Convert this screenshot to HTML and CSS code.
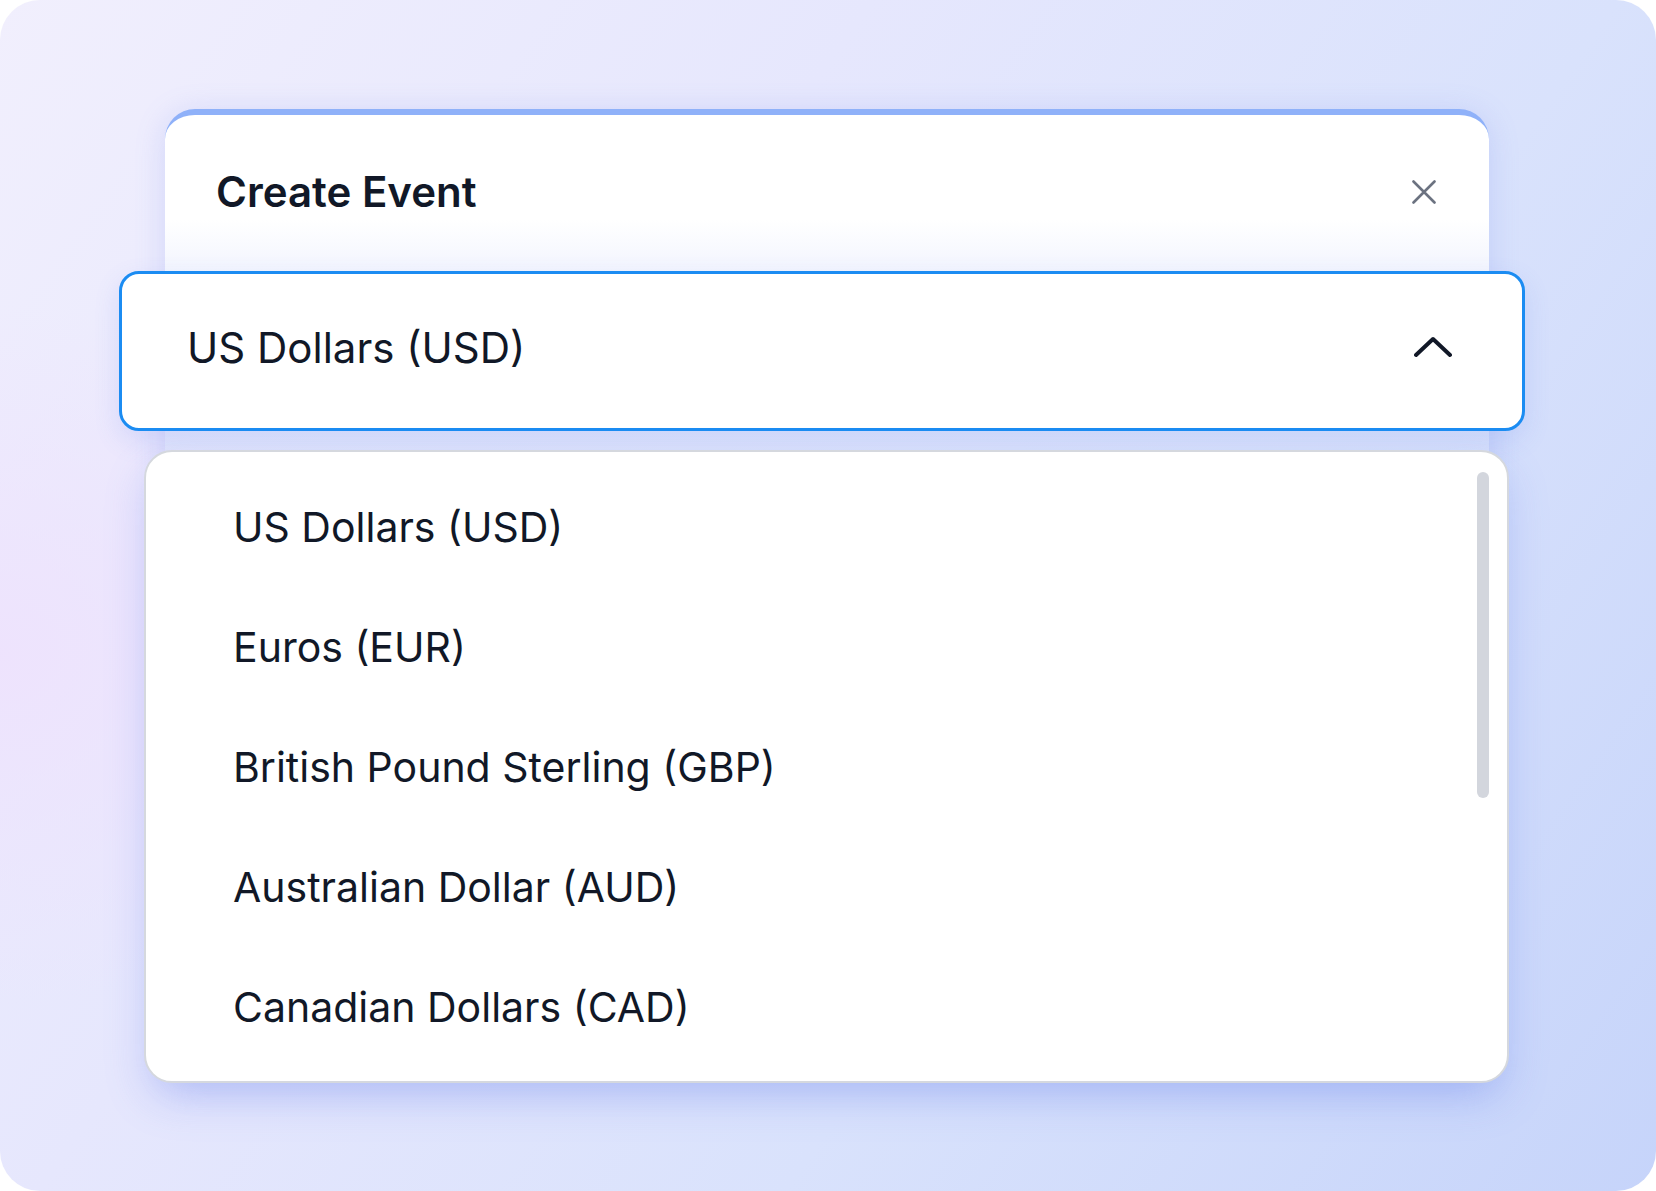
FILE: index.html
```html
<!DOCTYPE html>
<html lang="en">
<head>
<meta charset="utf-8">
<title>Create Event</title>
<link rel="stylesheet" href="styles.css">
</head>
<body>
<div class="stage">
  <div class="modal">
    <div class="modal-header">
      <h1 class="title">Create Event</h1>
      <button class="close" aria-label="Close">
        <svg width="24" height="24" viewBox="0 0 24 24" fill="none" stroke="#6b7280" stroke-width="2.6" stroke-linecap="round"><path d="M1.5 1.5L22.5 22.5M22.5 1.5L1.5 22.5"/></svg>
      </button>
    </div>
    <div class="select">
      <span class="select-value">US Dollars (USD)</span>
      <svg class="chevron" width="38" height="22" viewBox="0 0 38 22" fill="none" stroke="#111827" stroke-width="4" stroke-linecap="round" stroke-linejoin="round"><path d="M2 19L19 3L36 19"/></svg>
    </div>
    <div class="dropdown">
      <ul class="options">
        <li class="option">US Dollars (USD)</li>
        <li class="option">Euros (EUR)</li>
        <li class="option">British Pound Sterling (GBP)</li>
        <li class="option">Australian Dollar (AUD)</li>
        <li class="option">Canadian Dollars (CAD)</li>
      </ul>
      <div class="scrollbar"></div>
    </div>
  </div>
</div>
</body>
</html>
```
FILE: styles.css
```css
* { box-sizing: border-box; }
html, body { margin: 0; padding: 0; background: #ffffff; }
body {
  font-family: Inter, "Noto Sans", "Liberation Sans", sans-serif;
  color: #111827;
}
.stage {
  width: 1656px;
  height: 1191px;
  border-radius: 40px;
  overflow: hidden;
  padding: 109px 0 0 165px;
  background:
    radial-gradient(ellipse 600px 500px at 0% 55%, rgba(238, 226, 253, 0.9), rgba(238, 226, 253, 0) 70%),
    linear-gradient(125deg, #f1effd 0%, #e6e7fd 35%, #d9e2fc 65%, #c6d4fa 100%);
}
.modal {
  width: 1324px;
  border-top: 6px solid #8fb1f9;
  border-radius: 30px;
  background: linear-gradient(to bottom, #ffffff 0px, #ffffff 105px, #f4f6fe 150px, rgba(222, 230, 252, 0.55) 330px, rgba(222, 230, 252, 0) 420px);
  box-shadow: 0 4px 30px rgba(110, 130, 235, 0.22);
}
.modal-header {
  height: 156px;
  display: flex;
  align-items: center;
  justify-content: space-between;
  padding: 0 53px 2px 51px;
}
.title {
  margin: 0 0 2px;
  font-size: 42px;
  font-weight: 600;
  color: #111827;
}
.close {
  width: 24px;
  height: 24px;
  padding: 0;
  border: 0;
  background: none;
  display: flex;
}
.select {
  margin: 0 -36px 0 -46px;
  height: 160px;
  border: 3px solid #1b8cf2;
  border-radius: 20px;
  background: #ffffff;
  display: flex;
  align-items: center;
  justify-content: space-between;
  padding: 0 70px 8px 65px;
  box-shadow: 0 10px 26px rgba(90, 120, 235, 0.16);
}
.select-value {
  font-size: 42px;
  font-weight: 400;
  color: #111827;
}
.chevron { display: block; }
.dropdown {
  position: relative;
  margin: 19px -20px 0 -21px;
  border: 2px solid #d5d8de;
  border-radius: 28px;
  background: #ffffff;
  padding: 15px 0 14px;
  box-shadow: 0 18px 40px rgba(90, 120, 235, 0.22);
}
.options {
  list-style: none;
  margin: 0;
  padding: 0;
}
.option {
  height: 120px;
  display: flex;
  align-items: center;
  padding-left: 87px;
  font-size: 41px;
  font-weight: 400;
  color: #111827;
}
.scrollbar {
  position: absolute;
  top: 20px;
  right: 18px;
  width: 12px;
  height: 326px;
  border-radius: 6px;
  background: #d3d6dd;
}
```
